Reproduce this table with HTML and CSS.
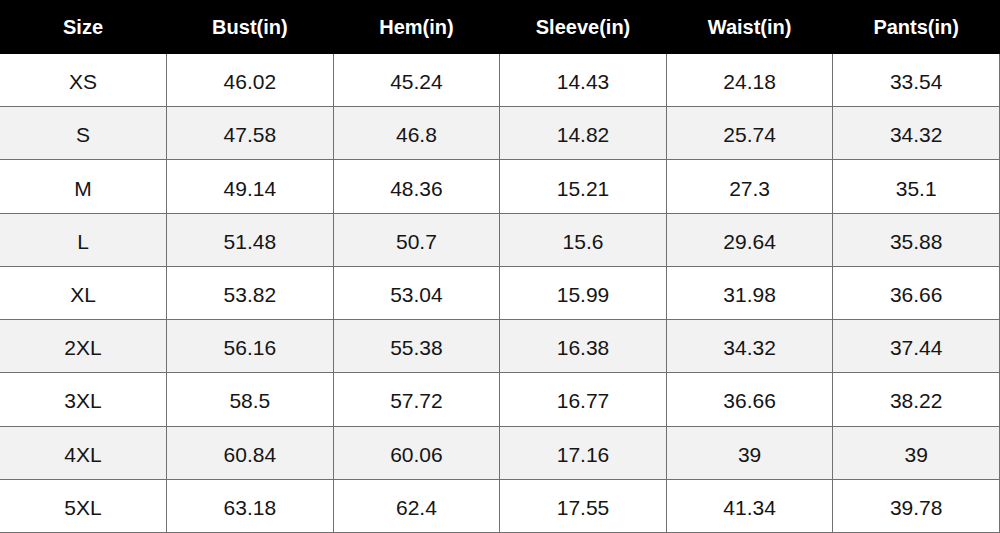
FILE: index.html
```html
<!DOCTYPE html>
<html>
<head>
<meta charset="utf-8">
<link rel="stylesheet" href="styles.css">
</head>
<body>
<table class="size-table">
  <thead>
    <tr><th>Size</th><th>Bust(in)</th><th>Hem(in)</th><th>Sleeve(in)</th><th>Waist(in)</th><th>Pants(in)</th></tr>
  </thead>
  <tbody>
    <tr><td>XS</td><td>46.02</td><td>45.24</td><td>14.43</td><td>24.18</td><td>33.54</td></tr>
    <tr><td>S</td><td>47.58</td><td>46.8</td><td>14.82</td><td>25.74</td><td>34.32</td></tr>
    <tr><td>M</td><td>49.14</td><td>48.36</td><td>15.21</td><td>27.3</td><td>35.1</td></tr>
    <tr><td>L</td><td>51.48</td><td>50.7</td><td>15.6</td><td>29.64</td><td>35.88</td></tr>
    <tr><td>XL</td><td>53.82</td><td>53.04</td><td>15.99</td><td>31.98</td><td>36.66</td></tr>
    <tr><td>2XL</td><td>56.16</td><td>55.38</td><td>16.38</td><td>34.32</td><td>37.44</td></tr>
    <tr><td>3XL</td><td>58.5</td><td>57.72</td><td>16.77</td><td>36.66</td><td>38.22</td></tr>
    <tr><td>4XL</td><td>60.84</td><td>60.06</td><td>17.16</td><td>39</td><td>39</td></tr>
    <tr><td>5XL</td><td>63.18</td><td>62.4</td><td>17.55</td><td>41.34</td><td>39.78</td></tr>
  </tbody>
</table>
</body>
</html>
```

FILE: styles.css
```css
html, body {
  margin: 0;
  padding: 0;
  background: #ffffff;
}

.size-table {
  width: 1000px;
  height: 533px;
  border-collapse: collapse;
  table-layout: fixed;
  font-family: "Liberation Sans", Arial, sans-serif;
  font-size: 21px;
  color: #151515;
}

.size-table th,
.size-table td {
  text-align: center;
  vertical-align: middle;
  padding: 4px 0 0 0;
  border: 1px solid #707070;
}

.size-table th:first-child,
.size-table td:first-child {
  border-left: none;
}

.size-table thead tr {
  height: 53px;
}

.size-table th {
  background: #000000;
  color: #ffffff;
  font-size: 20px;
  font-weight: bold;
  padding: 0;
  border-color: #000000;
}

.size-table tbody tr:nth-child(even) td {
  background: #f2f2f2;
}
```
